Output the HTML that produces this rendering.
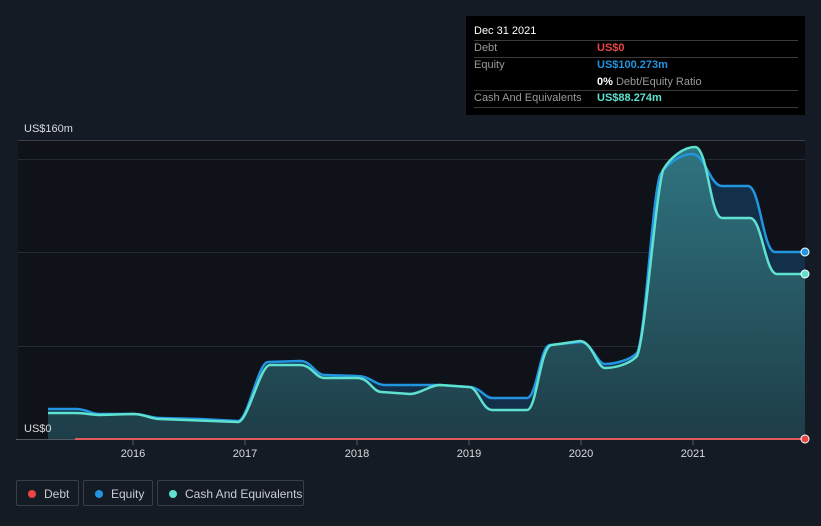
<!DOCTYPE html>
<html><head><meta charset="utf-8"><style>
body{margin:0;background:#151b24;width:821px;height:526px;overflow:hidden;font-family:"Liberation Sans",sans-serif;}
.tip{position:absolute;left:466px;top:16px;width:339px;height:99px;background:#000;}
.tip .r{position:absolute;left:8px;font-size:11px;color:#999;}
.tip .v{position:absolute;left:131px;font-size:11px;font-weight:bold;}
.tip .ln{position:absolute;left:8px;width:324px;height:1px;background:#3a3a3a;}
.leg{position:absolute;top:480px;height:26px;border:1px solid #3a3f47;border-radius:2px;color:#c9ccd1;font-size:12px;line-height:26px;box-sizing:border-box;}
.leg i{position:absolute;left:11px;top:9px;width:8px;height:8px;border-radius:50%;}
.leg span{position:absolute;left:27px;}
</style></head><body>
<svg width="821" height="526" style="position:absolute;left:0;top:0">
<defs><linearGradient id="g" x1="0" y1="0" x2="0" y2="1"><stop offset="0" stop-color="#2f7480"/><stop offset="1" stop-color="#1e3d48"/></linearGradient></defs>
<rect x="18" y="140" width="787" height="299" fill="#0f1319"/>
<line x1="18" y1="140.5" x2="805" y2="140.5" stroke="#3a3f47"/>
<line x1="18" y1="159.5" x2="805" y2="159.5" stroke="#262b33"/>
<line x1="18" y1="252.5" x2="805" y2="252.5" stroke="#262b33"/>
<line x1="18" y1="346.5" x2="805" y2="346.5" stroke="#262b33"/>
<path d="M48,409 L75,409 C88,409 90,414 100,414 L133,414 C145,414 150,418 160,418 L200,419 L238,421 C248,421 258,362 268,362 L300,361 C312,361 315,375 325,375 L357,376 C370,376 375,385 385,385 L440,385 L469,387 C480,387 485,398 492,398 L527,398 C537,398 540,345 550,345 L580,342 C592,342 597,364 605,364 C615,364 630,360 637,353 C645,340 652,200 660,175 C666,165 680,154 692,154 C705,154 710,186 722,186 L748,186 C760,186 763,252 775,252 L805,252 L805,439 L48,439Z" fill="#12304a"/>
<path d="M48,413 L75,413 C88,413 90,415 100,415 L133,414 C145,414 150,419 160,419 L238,422 C248,422 260,365 270,365 L300,365 C312,365 315,378 325,378 L357,378 C370,378 372,392 382,392 L410,394 C420,394 430,385 440,385 L469,387 C478,387 482,410 492,410 L527,410 C537,410 540,345 552,345 L580,341 C592,341 597,368 605,368 C615,368 630,364 637,356 C645,340 655,200 663,170 C670,158 683,147 695,147 C708,147 710,218 722,218 L750,218 C762,218 765,274 777,274 L805,274 L805,439 L48,439Z" fill="url(#g)"/>
<path d="M48,409 L75,409 C88,409 90,414 100,414 L133,414 C145,414 150,418 160,418 L200,419 L238,421 C248,421 258,362 268,362 L300,361 C312,361 315,375 325,375 L357,376 C370,376 375,385 385,385 L440,385 L469,387 C480,387 485,398 492,398 L527,398 C537,398 540,345 550,345 L580,342 C592,342 597,364 605,364 C615,364 630,360 637,353 C645,340 652,200 660,175 C666,165 680,154 692,154 C705,154 710,186 722,186 L748,186 C760,186 763,252 775,252 L805,252" fill="none" stroke="#2394df" stroke-width="2.5"/>
<path d="M48,413 L75,413 C88,413 90,415 100,415 L133,414 C145,414 150,419 160,419 L238,422 C248,422 260,365 270,365 L300,365 C312,365 315,378 325,378 L357,378 C370,378 372,392 382,392 L410,394 C420,394 430,385 440,385 L469,387 C478,387 482,410 492,410 L527,410 C537,410 540,345 552,345 L580,341 C592,341 597,368 605,368 C615,368 630,364 637,356 C645,340 655,200 663,170 C670,158 683,147 695,147 C708,147 710,218 722,218 L750,218 C762,218 765,274 777,274 L805,274" fill="none" stroke="#5fe1d0" stroke-width="2.5"/>
<line x1="16" y1="439.5" x2="805" y2="439.5" stroke="#555a62"/>
<line x1="75" y1="439" x2="805" y2="439" stroke="#e05a5a" stroke-width="2"/>
<circle cx="805" cy="252" r="4" fill="#2394df" stroke="#fff" stroke-width="1"/>
<circle cx="805" cy="274" r="4" fill="#5fe1d0" stroke="#fff" stroke-width="1"/>
<circle cx="805" cy="439" r="4" fill="#e84545" stroke="#fff" stroke-width="1"/>
<g stroke="#555a62"><line x1="133" y1="440" x2="133" y2="445"/><line x1="245" y1="440" x2="245" y2="445"/><line x1="357" y1="440" x2="357" y2="445"/><line x1="469" y1="440" x2="469" y2="445"/><line x1="581" y1="440" x2="581" y2="445"/><line x1="693" y1="440" x2="693" y2="445"/></g>
<g fill="#d8dadd" font-size="11" font-family="Liberation Sans,sans-serif" text-anchor="middle"><text x="133" y="457">2016</text><text x="245" y="457">2017</text><text x="357" y="457">2018</text><text x="469" y="457">2019</text><text x="581" y="457">2020</text><text x="693" y="457">2021</text></g>
<text x="24" y="132" fill="#d8dadd" font-size="11" font-family="Liberation Sans,sans-serif">US$160m</text>
<text x="24" y="432" fill="#d8dadd" font-size="11" font-family="Liberation Sans,sans-serif">US$0</text>
</svg>
<div class="tip">
<div class="r" style="top:9px;color:#fff">Dec 31 2021</div>
<div class="ln" style="top:24px"></div>
<div class="r" style="top:26px">Debt</div><div class="v" style="top:26px;color:#e84545">US$0</div>
<div class="ln" style="top:41px"></div>
<div class="r" style="top:43px">Equity</div><div class="v" style="top:43px;color:#2394df">US$100.273m</div>
<div class="v" style="top:60px;color:#fff">0% <span style="color:#999;font-weight:normal">Debt/Equity Ratio</span></div>
<div class="ln" style="top:74px"></div>
<div class="r" style="top:76px">Cash And Equivalents</div><div class="v" style="top:76px;color:#5fe1d0">US$88.274m</div>
<div class="ln" style="top:91px"></div>
</div>
<div class="leg" style="left:16px;width:63px"><i style="background:#e84545"></i><span>Debt</span></div>
<div class="leg" style="left:83px;width:70px"><i style="background:#2394df"></i><span>Equity</span></div>
<div class="leg" style="left:157px;width:147px"><i style="background:#5fe1d0"></i><span>Cash And Equivalents</span></div>
</body></html>
